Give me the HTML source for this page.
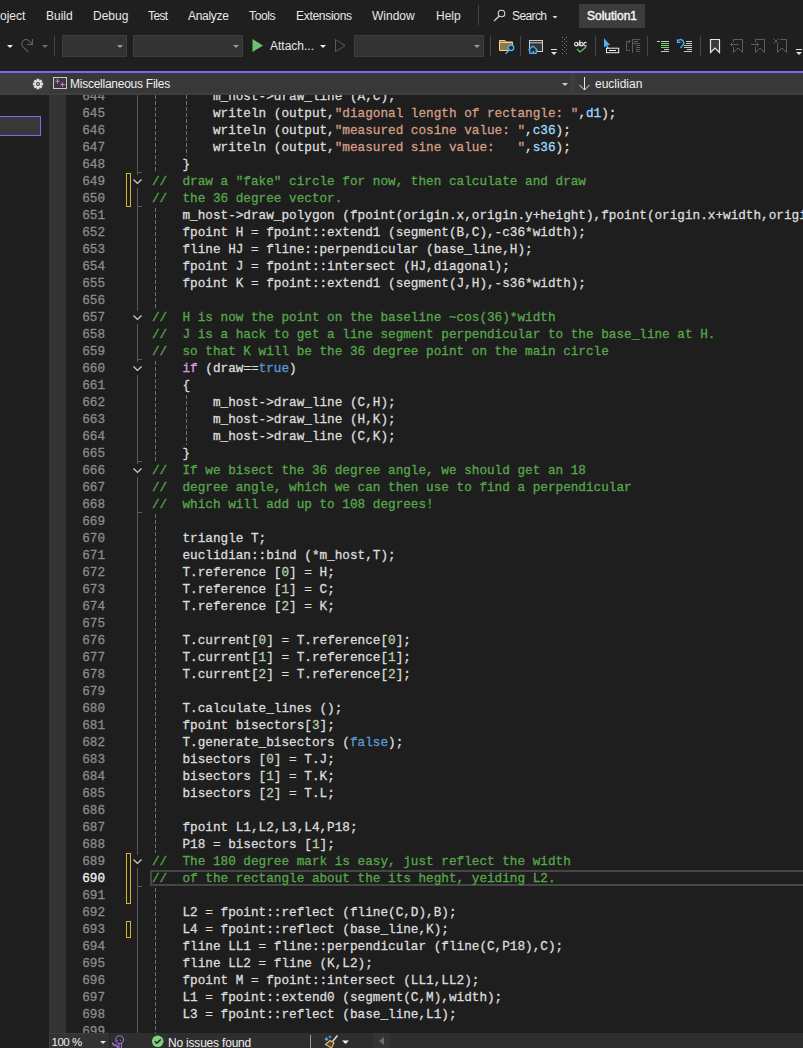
<!DOCTYPE html>
<html><head><meta charset="utf-8">
<style>
*{margin:0;padding:0;box-sizing:border-box}
html,body{width:803px;height:1048px;overflow:hidden;background:#1f1f1f;font-family:"Liberation Sans",sans-serif;position:relative}
.abs{position:absolute}
.menu{position:absolute;top:0;left:0;width:803px;height:30px;background:#1f1f1f;color:#e8e8e8;font-size:12px}
.menu span{position:absolute;top:9px;line-height:14px;white-space:nowrap}
.tb{position:absolute;top:30px;left:0;width:803px;height:40px;background:#1f1f1f}
.sep{position:absolute;width:1px;background:#3d3d3d}
.combo{position:absolute;background:#2d2d2d;border:1px solid #3f3f3f}
.tri{position:absolute;width:0;height:0;border-left:3px solid transparent;border-right:3px solid transparent;border-top:3px solid #c8c8c8}
.accent{position:absolute;top:71px;left:0;width:803px;height:2px;background:#7a68f0}
.nav{position:absolute;top:73px;left:0;width:803px;height:22px;background:#3d3d3d}
.leftpanel{position:absolute;top:95px;left:0;width:49px;height:953px;background:#1f1f1f}
.editor{position:absolute;top:95px;left:49px;width:754px;height:938px;background:#1e1e1e;overflow:hidden}
.imargin{position:absolute;top:95px;left:49px;width:17px;height:938px;background:#333333}
.clip{position:absolute;top:95px;left:0;width:803px;height:938px;overflow:hidden}
.inner{position:absolute;top:-95px;left:0;width:803px;height:1048px}
.ln{position:absolute;left:152px;height:17px;line-height:17px;white-space:pre;font-family:"Liberation Mono",monospace;font-size:12.69px;color:#dcdcdc;-webkit-text-stroke:0.3px}
.num{position:absolute;left:60px;width:45px;text-align:right;height:17px;line-height:17px;font-family:"Liberation Mono",monospace;font-size:12.69px;color:#8b8b8b;-webkit-text-stroke:0.3px}
.num.cur{color:#f0f0f0}
.s{color:#d69d85}.v{color:#9cdcfe}.c{color:#57a64a}.k{color:#569cd6}.k2{color:#d8a0df}.n{color:#b5cea8}
.guide{position:absolute;width:1px;background-image:linear-gradient(to bottom,#707070 0,#707070 4px,transparent 4px,transparent 6px);background-size:1px 6px;background-repeat:repeat-y}
.ovl{position:absolute;left:137px;width:1px;background:#5a5a5a}
.otick{position:absolute;left:137px;width:5px;height:1px;background:#5a5a5a}
.chev{position:absolute;left:132px}
.mark{position:absolute;left:126px;width:5px;border:1px solid #d7b332}
.curline{position:absolute;left:150px;top:870px;width:660px;height:16px;border:2px solid #464646}
.status{position:absolute;top:1033px;left:49px;width:754px;height:15px;background:#2e2e2e}
</style></head><body>
<div class="menu">
<span style="left:-12px">Project</span>
<span style="left:46px">Build</span>
<span style="left:93px">Debug</span>
<span style="left:148px;letter-spacing:-0.6px">Test</span>
<span style="left:188px;letter-spacing:-0.3px">Analyze</span>
<span style="left:249px;letter-spacing:-0.35px">Tools</span>
<span style="left:296px;letter-spacing:-0.3px">Extensions</span>
<span style="left:372px">Window</span>
<span style="left:436px">Help</span>
<span style="left:512px;letter-spacing:-0.6px">Search</span>
<div class="abs" style="left:579px;top:4px;width:66px;height:24px;background:#3c3c3c"></div>
<span style="left:587px;-webkit-text-stroke:0.45px #f4f4f4;color:#f4f4f4">Solution1</span>
</div>
<div class="tb">
<span class="abs" style="left:270px;top:9px;font-size:12px;color:#e8e8e8;line-height:14px">Attach...</span>
</div>
<svg class="abs" style="left:0;top:0" width="803" height="70" viewBox="0 0 803 70">
<g shape-rendering="crispEdges">
<rect x="62.5" y="35.5" width="64" height="21" fill="#333333" stroke="#3e3e3e"/>
<rect x="133.5" y="35.5" width="109" height="21" fill="#333333" stroke="#3e3e3e"/>
<rect x="354.5" y="35.5" width="129" height="21" fill="#333333" stroke="#3e3e3e"/>
<rect x="54" y="36" width="1" height="20" fill="#454545"/>
<rect x="490" y="36" width="1" height="20" fill="#454545"/>
<rect x="520" y="36" width="1" height="20" fill="#454545"/>
<rect x="595" y="36" width="1" height="20" fill="#454545"/>
<rect x="647" y="36" width="1" height="20" fill="#454545"/>
<rect x="700" y="36" width="1" height="20" fill="#454545"/>
<rect x="478" y="5" width="1" height="20" fill="#454545"/>
</g>
<!-- dropdown triangles -->
<path d="M7 45 H13 L10 48 Z" fill="#f0f0f0"/>
<path d="M42 45 H48 L45 48 Z" fill="#6e6e6e"/>
<path d="M117 45 H123 L120 48 Z" fill="#9a9a9a"/>
<path d="M233 45 H239 L236 48 Z" fill="#9a9a9a"/>
<path d="M474 45 H480 L477 48 Z" fill="#9a9a9a"/>
<path d="M320 45 H326 L323 48 Z" fill="#f0f0f0"/>
<path d="M552.5 16 H557.5 L555 18.5 Z" fill="#e0e0e0"/>
<!-- redo -->
<path d="M28.4 52.2 L22.6 46.4 A4.3 4.3 0 0 1 28.6 40.4 L32.2 44" fill="none" stroke="#5e5e5e" stroke-width="1.1"/>
<path d="M32.5 39 V44.5 H27" fill="none" stroke="#5e5e5e" stroke-width="1.1"/>
<!-- play -->
<path d="M252.5 39 L263 45.5 L252.5 52 Z" fill="#6cc26c"/>
<path d="M335.5 39.5 L345 45.5 L335.5 51.5 Z" fill="none" stroke="#5a5a5a" stroke-width="1"/>
<!-- folder + magnifier -->
<path d="M499.5 40.5 H505 L506.5 42 H512.5 V50.5 H499.5 Z" fill="#8c7750" stroke="#f0d58a" stroke-width="1"/>
<path d="M499.5 42.5 H512.5" stroke="#f0d58a" stroke-width="1"/>
<circle cx="511" cy="47.8" r="2.8" fill="#2a2a2a" stroke="#4db2f5" stroke-width="1.3"/>
<path d="M505.5 53.8 L509 50.2" stroke="#4db2f5" stroke-width="1.3"/>
<!-- window + house -->
<rect x="529.5" y="40.5" width="13" height="11" fill="#333" stroke="#cfcfcf" stroke-width="1"/>
<path d="M529.5 42.8 H542.5" stroke="#cfcfcf" stroke-width="1"/>
<path d="M528.3 50.3 L533 46 L537.5 50.3" fill="#2a2a2a" stroke="#4db2f5" stroke-width="1.2"/>
<path d="M529.8 49.5 V53.3 H536.2 V49.5" fill="#2a2a2a" stroke="#4db2f5" stroke-width="1.2"/>
<rect x="532.5" y="51" width="1.5" height="2" fill="#4db2f5"/>
<!-- overflow small -->
<rect x="551" y="49" width="6" height="1" fill="#e0e0e0"/>
<path d="M551 52 H557 L554 55 Z" fill="#e0e0e0"/>
<!-- grip -->
<g fill="#7a7a7a">
<rect x="562" y="37" width="1" height="1"/><rect x="566" y="37" width="1" height="1"/>
<rect x="564" y="39" width="1" height="1"/>
<rect x="562" y="41" width="1" height="1"/><rect x="566" y="41" width="1" height="1"/>
<rect x="564" y="43" width="1" height="1"/>
<rect x="562" y="45" width="1" height="1"/><rect x="566" y="45" width="1" height="1"/>
<rect x="564" y="47" width="1" height="1"/>
<rect x="562" y="49" width="1" height="1"/><rect x="566" y="49" width="1" height="1"/>
<rect x="564" y="51" width="1" height="1"/>
<rect x="562" y="53" width="1" height="1"/><rect x="566" y="53" width="1" height="1"/>
</g>
<!-- abc check -->
<g fill="none" stroke="#f0f0f0" stroke-width="1.1">
<circle cx="576.2" cy="44.2" r="1.65"/><path d="M577.9 42.3 V46.1"/>
<path d="M579.8 40.3 V46.1"/><circle cx="581.5" cy="44.2" r="1.65"/>
<path d="M586.5 42.9 A1.7 1.7 0 1 0 586.5 45.5"/>
</g>
<path d="M577 49 L580 52 L586 47" fill="none" stroke="#6cc26c" stroke-width="1.2"/>
<!-- cursor arrow -->
<path d="M604 38.3 L610.2 45 L607.6 45.2 L608.8 48.6 L607.4 49.1 L606.2 45.8 L604 47.6 Z" fill="#4db2f5"/>
<rect x="606.5" y="48.2" width="12.2" height="4.5" fill="none" stroke="#f0f0f0" stroke-width="1"/>
<rect x="609" y="50" width="7" height="1" fill="#f0f0f0"/>
<!-- gray disabled icon -->
<g stroke="#5a5a5a" stroke-width="1" fill="none">
<path d="M630 50.5 H626.5 V41.5 H630"/>
<path d="M628.5 40 L630.5 41.5 L628.5 43"/>
<path d="M632.5 39 V53"/>
<path d="M632.5 39.5 H640"/>
<path d="M634 41.5 H638"/>
<path d="M632.5 43.5 H640"/>
<path d="M636 45.5 H640"/>
<path d="M636 47.5 H640"/>
<path d="M636 49.5 H640"/>
<path d="M636 51.5 H640"/>
</g>
<!-- comment icon -->
<g shape-rendering="crispEdges">
<rect x="657" y="41" width="3" height="1" fill="#c8c8c8"/>
<rect x="661" y="41" width="8" height="1" fill="#c8c8c8"/>
<rect x="661" y="43" width="8" height="1" fill="#6fd66f"/>
<rect x="661" y="45" width="8" height="1" fill="#6fd66f"/>
<rect x="661" y="47" width="8" height="1" fill="#6fd66f"/>
<rect x="664" y="49" width="5" height="1" fill="#c8c8c8"/>
<rect x="661" y="51" width="8" height="1" fill="#c8c8c8"/>
<rect x="686" y="41" width="6" height="1" fill="#c8c8c8"/>
<rect x="686" y="43" width="6" height="1" fill="#c8c8c8"/>
<rect x="684" y="45" width="8" height="1" fill="#c8c8c8"/>
<rect x="684" y="47" width="8" height="1" fill="#c8c8c8"/>
<rect x="687" y="49" width="5" height="1" fill="#c8c8c8"/>
<rect x="684" y="51" width="8" height="1" fill="#c8c8c8"/>
</g>
<path d="M680.5 48 L683 44.8 A3 3 0 0 0 678.2 40.8" fill="none" stroke="#4db2f5" stroke-width="1.3"/>
<path d="M677.5 39.3 V42.3 H680.5" fill="none" stroke="#4db2f5" stroke-width="1.3"/>
<!-- bookmarks -->
<path d="M710.5 39.5 H719.5 V52.5 L715 48 L710.5 52.5 Z" fill="#3a3a3a" stroke="#e6e6e6" stroke-width="1.2"/>
<g fill="none" stroke="#5e5e5e" stroke-width="1">
<path d="M733.5 42 V39.5 H742.5 V52.5 L738 48 L733.5 52.5 V47"/>
<path d="M730.5 44.5 H738.5 M732.5 42.5 L730.5 44.5 L732.5 46.5"/>
<path d="M755.5 42 V39.5 H764.5 V52.5 L760 48 L755.5 52.5 V47"/>
<path d="M751 44.5 H758.5 M756.5 42.5 L758.5 44.5 L756.5 46.5"/>
<path d="M780 39.5 H786.5 V52.5 L782 48 L777.5 52.5 V44"/>
<path d="M773.5 38.5 L778.5 43.5 M778.5 38.5 L773.5 43.5"/>
</g>
<rect x="796" y="49" width="6" height="1" fill="#e0e0e0"/>
<path d="M796 52 H802 L799 55 Z" fill="#e0e0e0"/>
<!-- search icon -->
<circle cx="501.5" cy="13.5" r="3.3" fill="none" stroke="#d8d8d8" stroke-width="1.1"/>
<path d="M499 16.2 L494 21" stroke="#d8d8d8" stroke-width="1.2"/>
</svg>

<div class="accent"></div>
<div class="nav">
<div class="abs" style="left:50px;top:0;width:520px;height:20px;background:#383838"></div>
<div class="abs" style="left:575px;top:0;width:228px;height:20px;background:#383838"></div>
<div class="abs" style="left:0;top:19.5px;width:803px;height:2.5px;background:#3f3f3f"></div>
<span class="abs" style="left:70px;top:4px;font-size:12px;color:#f0f0f0;line-height:14px;letter-spacing:-0.25px">Miscellaneous Files</span>
<span class="abs" style="left:595px;top:4px;font-size:12px;color:#f0f0f0;line-height:14px">euclidian</span>
<svg class="abs" style="left:0;top:0" width="803" height="21" viewBox="0 73 803 21">
<g fill="#e0e0e0">
<path fill-rule="evenodd" d="M36.65 80.88 L36.65 78.87 L39.35 78.87 L39.35 80.88 L39.25 80.84 L40.67 79.42 L42.58 81.33 L41.16 82.75 L41.12 82.65 L43.13 82.65 L43.13 85.35 L41.12 85.35 L41.16 85.25 L42.58 86.67 L40.67 88.58 L39.25 87.16 L39.35 87.12 L39.35 89.13 L36.65 89.13 L36.65 87.12 L36.75 87.16 L35.33 88.58 L33.42 86.67 L34.84 85.25 L34.88 85.35 L32.87 85.35 L32.87 82.65 L34.88 82.65 L34.84 82.75 L33.42 81.33 L35.33 79.42 L36.75 80.84 Z M36.00 84.00 a2.00 2.00 0 1 0 4.00 0 a2.00 2.00 0 1 0 -4.00 0 Z"/><circle cx="38" cy="84" r="0.9" fill="#d8d8d8"/>
</g>
<rect x="53.5" y="77.5" width="13" height="11" fill="#3a3a3a" stroke="#c8c8c8" stroke-width="1"/>
<path d="M57.5 79 V83.5 M55.3 81.3 H59.8 M62.5 82.3 V86.8 M60.3 84.5 H64.8" stroke="#d474e6" stroke-width="1.1"/>
<path d="M562 83 H568 L565 86 Z" fill="#d0d0d0"/>
<path d="M584.5 77 V90 M579.5 85 L584.5 90 L589.5 85" fill="none" stroke="#e8e8e8" stroke-width="1"/>
</svg>
</div>
<div class="leftpanel"></div>
<div class="abs" style="left:-1px;top:116px;width:42px;height:20px;background:#383838;border:1px solid #7a68f0"></div>
<div class="editor"></div>
<div class="imargin"></div>
<div class="clip"><div class="inner">
<div class="curline"></div>
<div class="num" style="top:88px">644</div>
<div class="num" style="top:105px">645</div>
<div class="num" style="top:122px">646</div>
<div class="num" style="top:139px">647</div>
<div class="num" style="top:156px">648</div>
<div class="num" style="top:173px">649</div>
<div class="num" style="top:190px">650</div>
<div class="num" style="top:207px">651</div>
<div class="num" style="top:224px">652</div>
<div class="num" style="top:241px">653</div>
<div class="num" style="top:258px">654</div>
<div class="num" style="top:275px">655</div>
<div class="num" style="top:292px">656</div>
<div class="num" style="top:309px">657</div>
<div class="num" style="top:326px">658</div>
<div class="num" style="top:343px">659</div>
<div class="num" style="top:360px">660</div>
<div class="num" style="top:377px">661</div>
<div class="num" style="top:394px">662</div>
<div class="num" style="top:411px">663</div>
<div class="num" style="top:428px">664</div>
<div class="num" style="top:445px">665</div>
<div class="num" style="top:462px">666</div>
<div class="num" style="top:479px">667</div>
<div class="num" style="top:496px">668</div>
<div class="num" style="top:513px">669</div>
<div class="num" style="top:530px">670</div>
<div class="num" style="top:547px">671</div>
<div class="num" style="top:564px">672</div>
<div class="num" style="top:581px">673</div>
<div class="num" style="top:598px">674</div>
<div class="num" style="top:615px">675</div>
<div class="num" style="top:632px">676</div>
<div class="num" style="top:649px">677</div>
<div class="num" style="top:666px">678</div>
<div class="num" style="top:683px">679</div>
<div class="num" style="top:700px">680</div>
<div class="num" style="top:717px">681</div>
<div class="num" style="top:734px">682</div>
<div class="num" style="top:751px">683</div>
<div class="num" style="top:768px">684</div>
<div class="num" style="top:785px">685</div>
<div class="num" style="top:802px">686</div>
<div class="num" style="top:819px">687</div>
<div class="num" style="top:836px">688</div>
<div class="num" style="top:853px">689</div>
<div class="num cur" style="top:870px">690</div>
<div class="num" style="top:887px">691</div>
<div class="num" style="top:904px">692</div>
<div class="num" style="top:921px">693</div>
<div class="num" style="top:938px">694</div>
<div class="num" style="top:955px">695</div>
<div class="num" style="top:972px">696</div>
<div class="num" style="top:989px">697</div>
<div class="num" style="top:1006px">698</div>
<div class="num" style="top:1023px">699</div>
<div class="mark" style="top:173px;height:34px"></div>
<div class="mark" style="top:853px;height:51px"></div>
<div class="mark" style="top:921px;height:17px"></div>
<div class="ovl" style="top:94px;height:81px"></div>
<div class="ovl" style="top:188px;height:123px"></div>
<div class="ovl" style="top:324px;height:38px"></div>
<div class="ovl" style="top:375px;height:89px"></div>
<div class="ovl" style="top:477px;height:378px"></div>
<div class="ovl" style="top:868px;height:165px"></div>
<svg class="chev" style="top:173px" width="11" height="17"><path d="M1.5 6.5 L5.5 10.5 L9.5 6.5" stroke="#d0d0d0" stroke-width="1.2" fill="none"/></svg>
<svg class="chev" style="top:309px" width="11" height="17"><path d="M1.5 6.5 L5.5 10.5 L9.5 6.5" stroke="#d0d0d0" stroke-width="1.2" fill="none"/></svg>
<svg class="chev" style="top:360px" width="11" height="17"><path d="M1.5 6.5 L5.5 10.5 L9.5 6.5" stroke="#d0d0d0" stroke-width="1.2" fill="none"/></svg>
<svg class="chev" style="top:462px" width="11" height="17"><path d="M1.5 6.5 L5.5 10.5 L9.5 6.5" stroke="#d0d0d0" stroke-width="1.2" fill="none"/></svg>
<svg class="chev" style="top:853px" width="11" height="17"><path d="M1.5 6.5 L5.5 10.5 L9.5 6.5" stroke="#d0d0d0" stroke-width="1.2" fill="none"/></svg>
<div class="otick" style="top:172px"></div>
<div class="otick" style="top:206px"></div>
<div class="otick" style="top:359px"></div>
<div class="otick" style="top:461px"></div>
<div class="otick" style="top:512px"></div>
<div class="otick" style="top:886px"></div>
<div class="guide" style="left:155px;top:88px;height:85px;background-position:0 1px"></div>
<div class="guide" style="left:186px;top:88px;height:68px;background-position:0 1px"></div>
<div class="guide" style="left:155px;top:207px;height:102px;background-position:0 1px"></div>
<div class="guide" style="left:155px;top:360px;height:102px;background-position:0 1px"></div>
<div class="guide" style="left:186px;top:394px;height:51px;background-position:0 1px"></div>
<div class="guide" style="left:155px;top:513px;height:340px;background-position:0 1px"></div>
<div class="guide" style="left:155px;top:887px;height:153px;background-position:0 1px"></div>
<div class="ln" style="top:88px">        m_host-&gt;draw_line (A,C);</div>
<div class="ln" style="top:105px">        writeln (output,<span class="s">&quot;diagonal length of rectangle: &quot;</span>,<span class="v">d1</span>);</div>
<div class="ln" style="top:122px">        writeln (output,<span class="s">&quot;measured cosine value: &quot;</span>,<span class="v">c36</span>);</div>
<div class="ln" style="top:139px">        writeln (output,<span class="s">&quot;measured sine value:   &quot;</span>,<span class="v">s36</span>);</div>
<div class="ln" style="top:156px">    }</div>
<div class="ln" style="top:173px"><span class="c">//  draw a &quot;fake&quot; circle for now, then calculate and draw</span></div>
<div class="ln" style="top:190px"><span class="c">//  the 36 degree vector.</span></div>
<div class="ln" style="top:207px">    m_host-&gt;draw_polygon (fpoint(origin.x,origin.y+height),fpoint(origin.x+width,origin.y+height));</div>
<div class="ln" style="top:224px">    fpoint H = fpoint::extend1 (segment(B,C),-c36*width);</div>
<div class="ln" style="top:241px">    fline HJ = fline::perpendicular (base_line,H);</div>
<div class="ln" style="top:258px">    fpoint J = fpoint::intersect (HJ,diagonal);</div>
<div class="ln" style="top:275px">    fpoint K = fpoint::extend1 (segment(J,H),-s36*width);</div>
<div class="ln" style="top:292px"></div>
<div class="ln" style="top:309px"><span class="c">//  H is now the point on the baseline ~cos(36)*width</span></div>
<div class="ln" style="top:326px"><span class="c">//  J is a hack to get a line segment perpendicular to the base_line at H.</span></div>
<div class="ln" style="top:343px"><span class="c">//  so that K will be the 36 degree point on the main circle</span></div>
<div class="ln" style="top:360px">    <span class="k2">if</span> (draw==<span class="k">true</span>)</div>
<div class="ln" style="top:377px">    {</div>
<div class="ln" style="top:394px">        m_host-&gt;draw_line (C,H);</div>
<div class="ln" style="top:411px">        m_host-&gt;draw_line (H,K);</div>
<div class="ln" style="top:428px">        m_host-&gt;draw_line (C,K);</div>
<div class="ln" style="top:445px">    }</div>
<div class="ln" style="top:462px"><span class="c">//  If we bisect the 36 degree angle, we should get an 18</span></div>
<div class="ln" style="top:479px"><span class="c">//  degree angle, which we can then use to find a perpendicular</span></div>
<div class="ln" style="top:496px"><span class="c">//  which will add up to 108 degrees!</span></div>
<div class="ln" style="top:513px"></div>
<div class="ln" style="top:530px">    triangle T;</div>
<div class="ln" style="top:547px">    euclidian::bind (*m_host,T);</div>
<div class="ln" style="top:564px">    T.reference [<span class="n">0</span>] = H;</div>
<div class="ln" style="top:581px">    T.reference [<span class="n">1</span>] = C;</div>
<div class="ln" style="top:598px">    T.reference [<span class="n">2</span>] = K;</div>
<div class="ln" style="top:615px"></div>
<div class="ln" style="top:632px">    T.current[<span class="n">0</span>] = T.reference[<span class="n">0</span>];</div>
<div class="ln" style="top:649px">    T.current[<span class="n">1</span>] = T.reference[<span class="n">1</span>];</div>
<div class="ln" style="top:666px">    T.current[<span class="n">2</span>] = T.reference[<span class="n">2</span>];</div>
<div class="ln" style="top:683px"></div>
<div class="ln" style="top:700px">    T.calculate_lines ();</div>
<div class="ln" style="top:717px">    fpoint bisectors[<span class="n">3</span>];</div>
<div class="ln" style="top:734px">    T.generate_bisectors (<span class="k">false</span>);</div>
<div class="ln" style="top:751px">    bisectors [<span class="n">0</span>] = T.J;</div>
<div class="ln" style="top:768px">    bisectors [<span class="n">1</span>] = T.K;</div>
<div class="ln" style="top:785px">    bisectors [<span class="n">2</span>] = T.L;</div>
<div class="ln" style="top:802px"></div>
<div class="ln" style="top:819px">    fpoint L1,L2,L3,L4,P18;</div>
<div class="ln" style="top:836px">    P18 = bisectors [<span class="n">1</span>];</div>
<div class="ln" style="top:853px"><span class="c">//  The 180 degree mark is easy, just reflect the width</span></div>
<div class="ln" style="top:870px"><span class="c">//  of the rectangle about the its heght, yeiding L2.</span></div>
<div class="ln" style="top:887px"></div>
<div class="ln" style="top:904px">    L2 = fpoint::reflect (fline(C,D),B);</div>
<div class="ln" style="top:921px">    L4 = fpoint::reflect (base_line,K);</div>
<div class="ln" style="top:938px">    fline LL1 = fline::perpendicular (fline(C,P18),C);</div>
<div class="ln" style="top:955px">    fline LL2 = fline (K,L2);</div>
<div class="ln" style="top:972px">    fpoint M = fpoint::intersect (LL1,LL2);</div>
<div class="ln" style="top:989px">    L1 = fpoint::extend0 (segment(C,M),width);</div>
<div class="ln" style="top:1006px">    L3 = fpoint::reflect (base_line,L1);</div>
<div class="ln" style="top:1023px"></div>
</div></div>
<div class="status">
<div class="abs" style="left:0;top:0;width:60px;height:15px;background:#333333;border-top:1px solid #3d3d3d;border-left:1px solid #3d3d3d"></div>
<div class="abs" style="left:60px;top:0;width:1px;height:15px;background:#262626"></div>
<div class="abs" style="left:324px;top:0;width:17px;height:15px;background:#343434"></div>
<span class="abs" style="left:2.5px;top:2px;font-size:11.5px;line-height:14px;color:#f0f0f0;letter-spacing:-0.5px">100 %</span>
<span class="abs" style="left:119px;top:3px;font-size:12px;line-height:14px;color:#f0f0f0;letter-spacing:-0.2px">No issues found</span>
</div>
<svg class="abs" style="left:0;top:1033px" width="803" height="15" viewBox="0 1033 803 15">
<path d="M100 1041 H106 L103 1044 Z" fill="#e0e0e0"/>
<circle cx="119.6" cy="1039.6" r="3.9" fill="none" stroke="#9a70d0" stroke-width="1.1"/><path d="M119 1043 V1048 M121.5 1043 V1048" stroke="#9a70d0" stroke-width="1.1"/><circle cx="117.5" cy="1040.3" r="0.6" fill="#9a70d0"/><circle cx="120.5" cy="1040.3" r="0.6" fill="#9a70d0"/><path d="M112.8 1042.5 a2.3 2.3 0 0 0 3.2 2.6 l2.6 2.9" fill="none" stroke="#9a70d0" stroke-width="1.7"/>
<circle cx="157.7" cy="1041.3" r="5.8" fill="#80d27f"/>
<path d="M154.8 1041.3 L156.9 1043.3 L160.7 1039.5" fill="none" stroke="#1a1a1a" stroke-width="1.5"/>
<rect x="310" y="1035" width="1" height="13" fill="#9a9a9a"/>
<path d="M326.5 1036.8 l0.8 1.5 l1.5 0.8 l-1.5 0.8 l-0.8 1.5 l-0.8 -1.5 l-1.5 -0.8 l1.5 -0.8 Z" fill="#4db2f5"/>
<path d="M330 1035 l0.6 1.2 l1.2 0.6 l-1.2 0.6 l-0.6 1.2 l-0.6 -1.2 l-1.2 -0.6 l1.2 -0.6 Z" fill="#4db2f5"/>
<path d="M332.5 1041.5 L337.5 1035.5" stroke="#d8d8d8" stroke-width="1.6"/>
<path d="M330 1040.5 L334 1043 L331.5 1048 L325.5 1044.5 Z" fill="#5a4a2a" stroke="#e2c070" stroke-width="1.1"/>
<path d="M342 1040.5 H349 L345.5 1044 Z" fill="#f0f0f0"/>
<path d="M384 1037 V1045 L379 1041 Z" fill="#6e6e6e"/>
</svg>
</body></html>
